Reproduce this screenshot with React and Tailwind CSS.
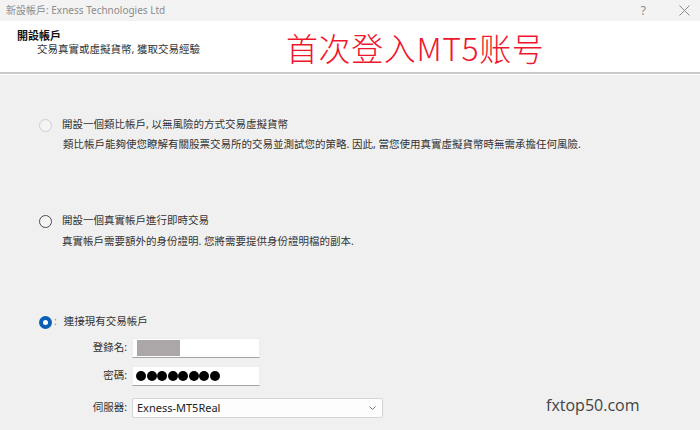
import React from "react";

function Radio({ kind }) {
  if (kind === "disabled")
    return <div className="w-[13px] h-[13px] rounded-full border border-[#cfcfcf] bg-[#f4f4f4] shrink-0" />;
  if (kind === "checked")
    return (
      <div className="w-[13px] h-[13px] rounded-full bg-[#0a5fb4] flex items-center justify-center shrink-0">
        <div className="w-[5px] h-[5px] rounded-full bg-white" />
      </div>
    );
  return <div className="w-[13px] h-[13px] rounded-full border border-[#4a4a4a] bg-[#f4f4f4] shrink-0" />;
}

function Field({ children, className = "" }) {
  return (
    <div className={"h-[20px] bg-white border border-[#ededed] border-b-[#a3a3a3] flex items-center " + className}>
      {children}
    </div>
  );
}

export default function App() {
  const font = "[font-family:'Noto_Sans','Noto_Sans_CJK_TC',sans-serif]";
  return (
    <div className={"w-[700px] h-[430px] flex flex-col bg-[#f0f0f0] text-[#222] " + font}>
      {/* title bar */}
      <div className="h-[21px] bg-[#f3f3f3] flex items-center pl-[6px] pr-[8px] text-[10px] text-[#8c8c8c]">
        <span>新設帳戶: Exness Technologies Ltd</span>
        <span className="ml-auto mr-[33px] text-[12px] text-[#8a8a8a]">?</span>
        <svg width="11" height="11" viewBox="0 0 11 11" className="mr-[2px]">
          <path d="M0.5 0.5 L10.5 10.5 M10.5 0.5 L0.5 10.5" stroke="#8a8a8a" strokeWidth="1" />
        </svg>
      </div>
      {/* header */}
      <div className="h-[51px] bg-white flex items-center pl-[17px]">
        <div className="w-[269px] self-start pt-[8px] flex flex-col">
          <div className="h-[14px] leading-[14px] text-[11px] font-bold text-[#111]">開設帳戶</div>
          <div className="h-[13px] leading-[13px] pl-[20px] text-[10.5px] text-[#333]">交易真實或虛擬貨幣, 獲取交易經驗</div>
        </div>
        <div className="text-[32px] leading-[36px] font-light tracking-[0.6px] text-[#f0162d] [font-family:'Noto_Sans_CJK_SC','Noto_Sans',sans-serif]">
          首次登入MT5账号
        </div>
      </div>
      <div className="h-[2px] bg-[#c9c9c9]" />
      <div className="h-[1px] bg-white" />
      {/* body */}
      <div className="flex-1 flex flex-col pt-[40px] text-[10.5px] text-[#333]">
        <div className="h-[20px] flex items-center pl-[39px] gap-[10px]">
          <Radio kind="disabled" />
          <span>開設一個類比帳戶, 以無風險的方式交易虛擬貨幣</span>
        </div>
        <div className="h-[20px] flex items-center pl-[63px]">
          類比帳戶能夠使您瞭解有關股票交易所的交易並測試您的策略. 因此, 當您使用真實虛擬貨幣時無需承擔任何風險.
        </div>

        <div className="mt-[56px] h-[20px] flex items-center pl-[39px] gap-[10px]">
          <Radio kind="normal" />
          <span>開設一個真實帳戶進行即時交易</span>
        </div>
        <div className="mt-[1px] h-[20px] flex items-center pl-[62px]">
          真實帳戶需要額外的身份證明. 您將需要提供身份證明檔的副本.
        </div>

        <div className="mt-[60px] h-[20px] flex items-center pl-[39px]">
          <Radio kind="checked" />
          <span className="ml-[2px] text-[#888]">:</span>
          <span className="ml-[7px]">連接現有交易帳戶</span>
        </div>

        <div className="mt-[6px] flex items-center">
          <div className="w-[127px] text-right">登錄名:</div>
          <Field className="ml-[5px] w-[128px]">
            <div className="ml-[4px] w-[43px] h-[16px] bg-[#aba7a8]" />
          </Field>
        </div>
        <div className="mt-[8px] flex items-center">
          <div className="w-[127px] text-right">密碼:</div>
          <Field className="ml-[5px] w-[128px]">
            <div className="ml-[3px] flex gap-[0.5px]">
              {[0, 1, 2, 3, 4, 5, 6, 7].map((i) => (
                <div key={i} className="w-[10px] h-[10px] rounded-full bg-black" />
              ))}
            </div>
          </Field>
        </div>
        <div className="mt-[7px] flex items-center">
          <div className="w-[127px] text-right">伺服器:</div>
          <div className="ml-[5px] w-[251px] h-[20px] bg-[#fdfdfd] border border-[#d6d6d6] rounded-[2px] flex items-center pl-[4px] pr-[6px] text-[11px] text-[#222]">
            <span>Exness-MT5Real</span>
            <svg width="7" height="4" viewBox="0 0 7 4" className="ml-auto">
              <path d="M0.5 0.5 L3.5 3.5 L6.5 0.5" stroke="#666" strokeWidth="0.9" fill="none" />
            </svg>
          </div>
          <div className="ml-[163px] mb-[6px] text-[16px] text-[#444] [font-family:'Open_Sans',sans-serif]">fxtop50.com</div>
        </div>
      </div>
    </div>
  );
}
